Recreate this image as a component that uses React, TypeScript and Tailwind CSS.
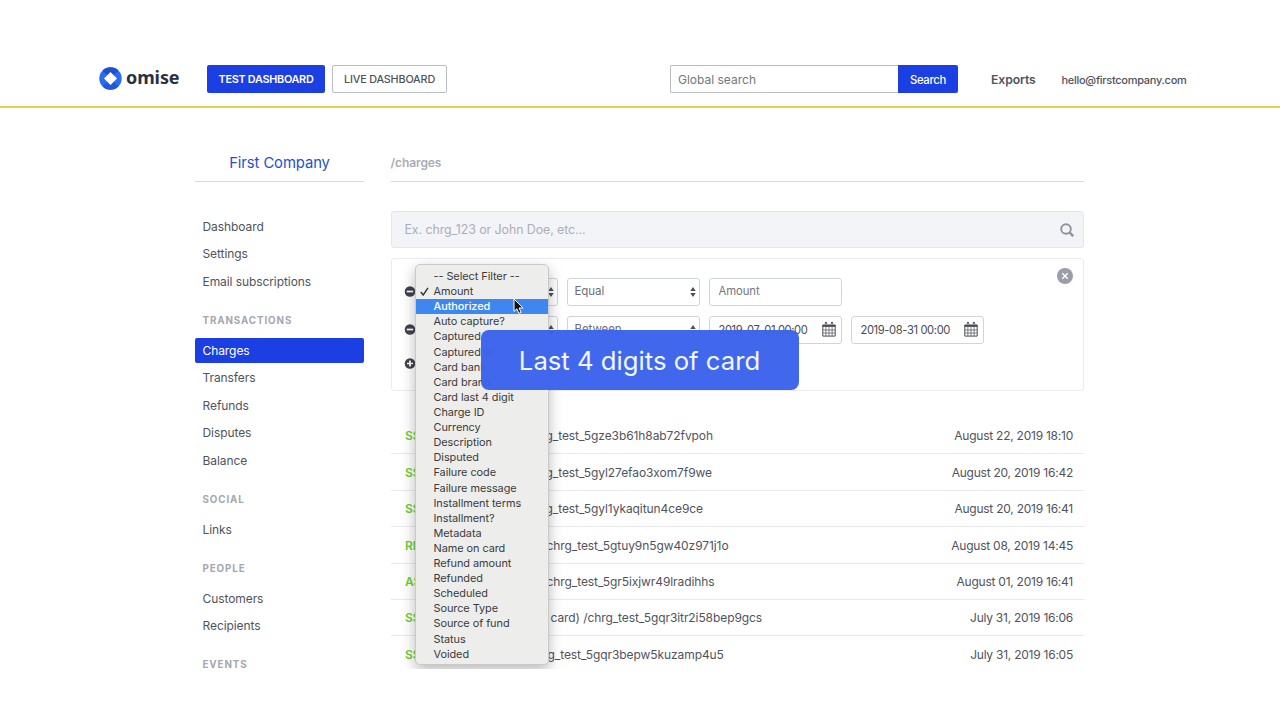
import type { ReactNode } from "react";

const filterOptions = [
  "-- Select Filter --", "Amount", "Authorized", "Auto capture?", "Captured", "Captured at", "Card bank",
  "Card brand", "Card last 4 digit", "Charge ID", "Currency", "Description", "Disputed", "Failure code",
  "Failure message", "Installment terms", "Installment?", "Metadata", "Name on card", "Refund amount",
  "Refunded", "Scheduled", "Source Type", "Source of fund", "Status", "Voided",
];

const charges = [
  { status: "S$", pad: "pl-[155px]", id: "g_test_5gze3b61h8ab72fvpoh", date: "August 22, 2019 18:10" },
  { status: "S$", pad: "pl-[155px]", id: "g_test_5gyl27efao3xom7f9we", date: "August 20, 2019 16:42" },
  { status: "S$", pad: "pl-[155px]", id: "g_test_5gyl1ykaqitun4ce9ce", date: "August 20, 2019 16:41" },
  { status: "RM", pad: "pl-[156px]", id: "chrg_test_5gtuy9n5gw40z971j1o", date: "August 08, 2019 14:45" },
  { status: "A$", pad: "pl-[156px]", id: "chrg_test_5gr5ixjwr49lradihhs", date: "August 01, 2019 16:41" },
  { status: "S$", pad: "pl-[160px]", id: "card) /chrg_test_5gqr3itr2i58bep9gcs", date: "July 31, 2019 16:06" },
  { status: "S$", pad: "pl-[157px]", id: "g_test_5gqr3bepw5kuzamp4u5", date: "July 31, 2019 16:05" },
];

function Logo() {
  return (
    <div className="flex items-center">
      <svg width="23" height="23" viewBox="0 0 23 23">
        <circle cx="11.5" cy="11.5" r="11.2" fill="#2a6cf0" />
        <path d="M3.6 3.6a11.2 11.2 0 0 1 15.8 0L11.5 11.5z" fill="#1c4fd6" />
        <path d="M3.6 19.4a11.2 11.2 0 0 0 15.8 0L11.5 11.5z" fill="#2057dc" />
        <path d="M11.5 5l6.5 6.5-6.5 6.5L5 11.5z" fill="#fff" />
      </svg>
      <span className="-mt-[3px] ml-1 font-['Noto_Sans'] text-[18px] leading-6 font-bold tracking-[-0.1px] text-[#2b303f]">omise</span>
    </div>
  );
}

function Stepper() {
  return (
    <svg width="6" height="10" viewBox="0 0 6 10" fill="#4b4f57">
      <path d="M3 0l2.7 4H.3zM3 10L.3 6h5.4z" />
    </svg>
  );
}

function Select({ label }: { label?: string }) {
  return (
    <div className="flex h-[28px] w-[133px] items-center rounded-[3px] border border-[#d0d4dc] bg-white pr-[3px] pl-[7px] text-[#6b6e76]">
      {label && <span>{label}</span>}
      <div className="ml-auto"><Stepper /></div>
    </div>
  );
}

function Calendar() {
  return (
    <svg width="14" height="15" viewBox="0 0 14 15" fill="none" stroke="#4b4d55">
      <path d="M.8 3.2h12.4v10.9H.8z" strokeWidth="1" />
      <path d="M.5 3.8h13" strokeWidth="2.2" />
      <path d="M4 .9v2.6M10 .9v2.6" strokeWidth="2.2" strokeLinecap="round" />
      <path d="M4 1.2v1.8M10 1.2v1.8" stroke="#fff" strokeWidth=".8" />
      <path d="M3.9 5v9M7 5v9M10.1 5v9M1 8h12M1 11h12" strokeWidth=".7" />
    </svg>
  );
}

function DateField({ value }: { value: string }) {
  return (
    <div className="flex h-[28px] w-[133px] items-center justify-between rounded-[3px] border border-[#d0d4dc] bg-white pr-[5px] pl-[9px] text-[11.2px] tracking-[-0.38px] text-[#4a4c55]">
      <span className="pt-[1px]">{value}</span>
      <Calendar />
    </div>
  );
}

function RoundIcon({ plus = false }: { plus?: boolean }) {
  return (
    <svg className="mr-[9px]" width="12" height="11" viewBox="0 0 12 11">
      <circle cx="6" cy="5.5" r="5.3" fill="#41434d" />
      <path d={plus ? "M3 5.5h6M6 2.5v6" : "M2.8 5.5h6.4"} stroke="#fff" strokeWidth="1.7" />
    </svg>
  );
}

function NavItem({ children, active = false }: { children: ReactNode; active?: boolean }) {
  return (
    <div
      className={
        active
          ? "my-[1.25px] flex h-[25px] items-center rounded-[2px] bg-[#1c3fe3] pt-[1px] pl-[7.5px] text-white"
          : "flex h-[27.5px] items-center pl-[7.5px]"
      }
    >
      {children}
    </div>
  );
}

function NavHeading({ children }: { children: ReactNode }) {
  return (
    <div className="mt-[12px] flex h-[29.5px] items-center pb-[2px] pl-[7.5px] text-[9.8px] font-bold tracking-[0.9px] text-[#a3a7b1]">
      {children}
    </div>
  );
}

function FilterMenu() {
  return (
    <div className="absolute top-[-1px] left-[16px] z-10 h-[401px] w-[134px] rounded-[5px] border border-[#c9c9c9] bg-[#ededec] pt-[3.6px] text-[10.9px] tracking-[-0.05px] text-[#3b3b3b] shadow-[0_5px_14px_rgba(0,0,0,0.28)]">
      {filterOptions.map((option) => (
        <div
          key={option}
          className={
            option === "Authorized"
              ? "flex h-[15.11px] items-center bg-[#3f87f0] pl-[18px] font-medium whitespace-nowrap text-white"
              : "flex h-[15.11px] items-center pl-[18px] whitespace-nowrap"
          }
        >
          {option === "Amount" && (
            <svg className="-ml-[14px] mr-[5px]" width="9" height="9" viewBox="0 0 9 9" fill="none" stroke="#333" strokeWidth="1.4">
              <path d="M.8 5l2.4 3L8 .8" />
            </svg>
          )}
          {option}
        </div>
      ))}
      <svg className="absolute top-[33px] left-[97px]" width="12" height="17" viewBox="0 0 12 17">
        <path d="M1 1v12.4l2.9-2.6 2 4.6 2.2-1-2-4.4h4z" fill="#111" stroke="#fff" strokeWidth="1" />
      </svg>
    </div>
  );
}

export default function App() {
  return (
    <div className="relative h-[720px] w-[1280px] overflow-hidden bg-white font-['Inter','Liberation_Sans',sans-serif] text-[12px] tracking-[-0.08px] text-[#50535d]">
      <div className="h-[669px] overflow-hidden">
        <header className="flex h-[107.5px] items-start border-b-2 border-[#ebcb4c] pt-[65px] pl-[99px]">
          <div className="mt-[2px] w-[108px]"><Logo /></div>
          <div className="flex h-[28px] w-[118px] items-center justify-center rounded-[2px] bg-[#1c3fe3] pt-[2px] text-[10.8px] font-semibold tracking-[-0.25px] whitespace-nowrap text-white">TEST DASHBOARD</div>
          <div className="ml-[7px] flex h-[28px] w-[115px] items-center justify-center rounded-[2px] border border-[#b9bdc8] pt-[2px] text-[10.8px] font-medium tracking-[-0.18px] whitespace-nowrap">LIVE DASHBOARD</div>
          <div className="ml-[223px] flex h-[28px] w-[228px] items-center rounded-l-[2px] border border-r-0 border-[#b9bdc8] pt-[1px] pl-[7px] text-[12px] tracking-normal text-[#74767d]">Global search</div>
          <div className="flex h-[28px] w-[60px] items-center justify-center rounded-r-[2px] bg-[#1c3fe3] pt-[2px] text-[11.3px] font-medium tracking-[-0.3px] text-white">Search</div>
          <div className="ml-[33px] flex h-[31px] w-[70.5px] items-center text-[12.2px] font-semibold">Exports</div>
          <div className="flex h-[31px] items-center text-[11px] font-medium tracking-[-0.28px]">hello@firstcompany.com</div>
        </header>

        <div className="flex pl-[195px]">
          <aside className="w-[169px] shrink-0">
            <div className="flex h-[74.5px] items-end justify-center border-b border-[#d9dbe0] pb-[7px] text-[14.8px] text-[#2350d0]">First Company</div>
            <nav className="pt-[31px]">
              <NavItem>Dashboard</NavItem>
              <NavItem>Settings</NavItem>
              <NavItem>Email subscriptions</NavItem>
              <NavHeading>TRANSACTIONS</NavHeading>
              <NavItem active>Charges</NavItem>
              <NavItem>Transfers</NavItem>
              <NavItem>Refunds</NavItem>
              <NavItem>Disputes</NavItem>
              <NavItem>Balance</NavItem>
              <NavHeading>SOCIAL</NavHeading>
              <NavItem>Links</NavItem>
              <NavHeading>PEOPLE</NavHeading>
              <NavItem>Customers</NavItem>
              <NavItem>Recipients</NavItem>
              <NavHeading>EVENTS</NavHeading>
            </nav>
          </aside>

          <main className="ml-[26.5px] w-[693.5px] shrink-0">
            <div className="flex h-[74.5px] items-end border-b border-[#d9dbe0] pb-[9px] text-[12px] font-semibold text-[#a9acb5]">/charges</div>
            <div className="mt-[29px] flex h-[37px] items-center justify-between rounded-[3px] border border-[#e4e6eb] bg-[#f3f4f8] pr-[9px] pl-[13px] text-[12.4px] text-[#abaeb6]">
              <span className="pt-[1px]">Ex. chrg_123 or John Doe, etc...</span>
              <svg width="14" height="14" viewBox="0 0 14 14" fill="none" stroke="#8f929c" strokeWidth="1.9">
                <circle cx="6" cy="6" r="4.8" />
                <path d="M9.4 9.4l3.8 3.8" strokeWidth="2.3" />
              </svg>
            </div>
            <section className="relative mt-[10px] h-[133px] rounded-[3px] border border-[#ebecef] pt-[18px] pl-[12px] text-[11.5px]">
              <div className="flex h-[29px] items-center">
                <RoundIcon />
                <div className="flex gap-[9px]">
                  <Select />
                  <Select label="Equal" />
                  <div className="flex h-[28px] w-[133px] items-center rounded-[3px] border border-[#d0d4dc] pl-[9px] text-[11.3px] text-[#74767d]">Amount</div>
                </div>
              </div>
              <div className="mt-[9px] flex h-[29px] items-center">
                <RoundIcon />
                <div className="flex gap-[9px]">
                  <Select />
                  <Select label="Between" />
                  <DateField value="2019-07-01 00:00" />
                  <DateField value="2019-08-31 00:00" />
                </div>
              </div>
              <div className="mt-[14px]"><RoundIcon plus /></div>
              <svg className="absolute top-[9px] right-[10px]" width="16" height="16" viewBox="0 0 16 16">
                <circle cx="8" cy="8" r="8" fill="#9a9ea8" />
                <path d="M5.3 5.3l5.4 5.4M10.7 5.3l-5.4 5.4" stroke="#fff" strokeWidth="1.4" />
              </svg>
              <div className="absolute top-[6px] left-[7px]"><FilterMenu /></div>
              <div className="absolute top-[71px] left-[89px] z-20 flex h-[60px] w-[318px] items-center justify-center rounded-[8px] bg-[#3b63eb]/97 pt-[2px] text-[25.7px] tracking-normal text-[#f1f6ff]">Last 4 digits of card</div>
            </section>
            <div className="mt-[27px]">
              {charges.map((charge) => (
                <div key={charge.date} className="relative flex h-[36.4px] items-center justify-between border-b border-[#e8e9ec] pt-[1.4px] pr-[11px]">
                  <span className="absolute left-[14.5px] font-semibold text-[#6cd02f]">{charge.status}</span>
                  <span className={charge.pad}>{charge.id}</span>
                  <span className="tracking-[-0.24px]">{charge.date}</span>
                </div>
              ))}
            </div>
          </main>
        </div>
      </div>
    </div>
  );
}
